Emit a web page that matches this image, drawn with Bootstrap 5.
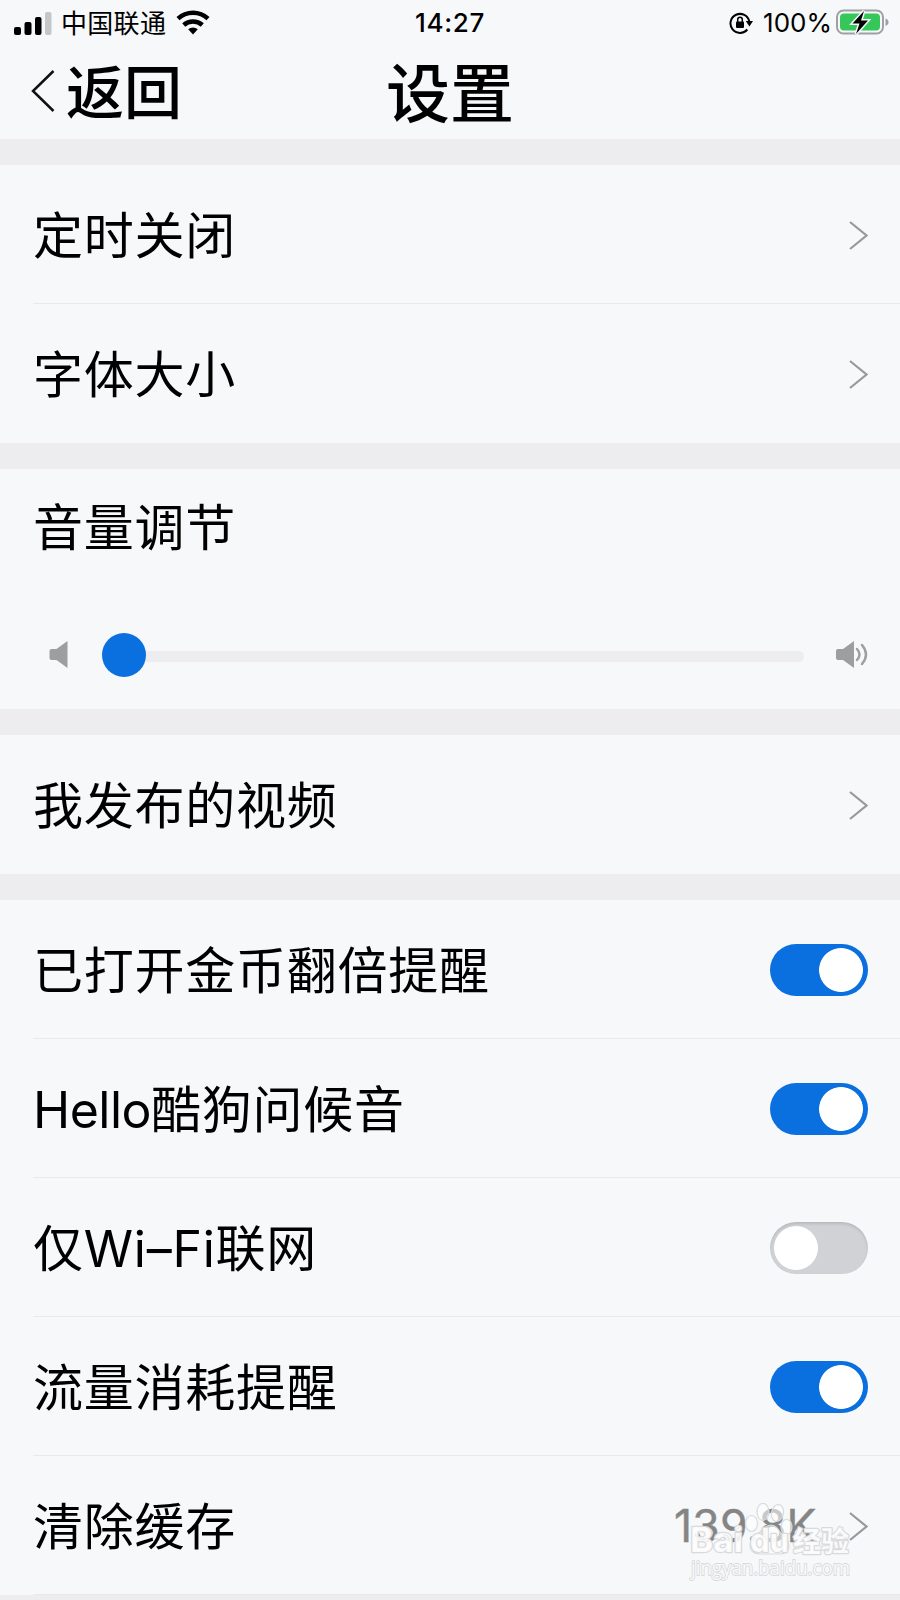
<!DOCTYPE html>
<html lang="zh-CN">
<head>
<meta charset="utf-8">
<meta name="viewport" content="width=device-width, initial-scale=1">
<title>设置</title>
<link rel="stylesheet" href="https://cdn.jsdelivr.net/npm/bootstrap@5.3.0/dist/css/bootstrap.min.css">
<style>
body{background:#ededef;color:#000;font-family:Inter,"Noto Sans CJK SC",sans-serif;width:900px;height:1600px;overflow:hidden}
svg{display:block;flex:none}
.panel{background:#f7f8fa}
.status{height:46px;padding:0 10px 0 14px;font-size:26px;line-height:46px}
.status>div{flex:1 1 0}
.carrier{font-family:"Noto Sans CJK SC",sans-serif;font-size:26px;letter-spacing:.3px;margin:-2px 10px 0 9px}
.clock{font-weight:500;letter-spacing:.7px;font-size:26px;padding-right:4px}
.pct{margin-left:10px;margin-right:4px}
.wifi,.battery{margin-top:-3px}
.topbar{height:93px}
.back{width:300px;padding-left:31px;font-family:"Noto Sans CJK SC",sans-serif;font-size:58px;font-weight:500;line-height:90px}
.back span{margin:-8px 0 0 11px}
.back svg{margin-top:-3px}
.heading{font-family:"Noto Sans CJK SC",sans-serif;font-size:64px;font-weight:500;line-height:90px;width:300px;margin-top:-8px}
.gap-band{height:26px}
.line{height:139px;margin-left:33px;padding:2px 32.5px 0 0;border-bottom:1px solid #e9e9ec}
.line:last-child{border-bottom-color:transparent}
.line>svg{margin-top:1px}
.label{font-size:50px;letter-spacing:.75px;line-height:70px;white-space:nowrap;margin-top:2px}
.latin{letter-spacing:-.5px}
.volume{height:240px;padding-top:24px}
.volume .label{margin-left:33px}
.slider{height:44px;margin-top:71px;padding:0 32px 0 49px}
.slider>svg{margin-bottom:4px}
.track{height:11px;border-radius:6px;background:#ededef;margin:1px 32px 0 33px}
.thumb{width:44px;height:44px;border-radius:50%;background:#0a70df;left:0;top:-18px}
.form-switch.sw{padding:0;margin:0;min-height:0}
.form-switch.sw .form-check-input{width:98px;height:52px;margin:0;border:0;float:none;display:block;border-radius:26px;background-color:#d1d2d6;box-shadow:inset 0 2px 3px #b8b9bd;background-size:44px 44px;background-repeat:no-repeat;background-position:4px 4px;background-image:radial-gradient(circle,#fff 21.5px,transparent 22.3px)}
.form-switch.sw .form-check-input:checked{background-color:#0a70df;box-shadow:none;background-position:49.5px 4px;background-image:radial-gradient(circle,#fff 21.5px,transparent 22.3px)}
.size{color:#858585;font-size:44.5px;letter-spacing:.2px;margin-right:32px;-webkit-text-stroke:.4px #858585}
.watermark{left:680px;bottom:8px}
</style>
</head>
<body>
<svg width="0" height="0" class="position-absolute"><defs>
<path id="chev" d="M1 2 17.500 15.500 1 29" fill="none" stroke="#999" stroke-width="2.200"/>
</defs></svg>
<header class="panel">
  <div class="status d-flex align-items-center">
    <div class="d-flex align-items-center">
      <svg width="38" height="26" viewBox="0 0 38 26"><rect x="0" y="17" width="7" height="8" rx="2"/><rect x="10.500" y="12" width="7" height="13" rx="2"/><rect x="21" y="7" width="6.500" height="18" rx="2"/><rect x="31" y="2" width="6.500" height="23" rx="2" fill="#c5c6c8"/></svg>
      <span class="carrier">中国联通</span>
      <svg class="wifi" width="34" height="26" viewBox="0 0 34 26"><g fill="none" stroke="#000" stroke-width="4.500"><path d="M2 9.700a22 22 0 0 1 30 0"/><path d="M7.700 16a13.800 13.800 0 0 1 18.600 0"/></g><path d="M12.200 20.200a7.500 7.500 0 0 1 9.600 0L17 25.400z"/></svg>
    </div>
    <div class="clock text-center">14:27</div>
    <div class="d-flex align-items-center justify-content-end">
      <svg width="24" height="22" viewBox="0 0 24 22"><path d="M18.300 17.500A9.500 9.500 0 1 1 20.300 9.500" fill="none" stroke="#000" stroke-width="2"/><path d="M16.800 9H24l-3.600 5.500z"/><rect x="7" y="9.500" width="8" height="6.500" rx="1"/><path d="M8.700 10V7.500a2.300 2.300 0 0 1 4.600 0V10" fill="none" stroke="#000" stroke-width="1.500"/></svg>
      <span class="pct">100%</span>
      <svg class="battery" width="54" height="26" viewBox="0 0 54 26"><rect x="1" y="1.500" width="46" height="23" rx="6.500" fill="none" stroke="#a0a0a4" stroke-width="2"/><rect x="4" y="4.500" width="40" height="17" rx="4" fill="#35c759"/><path d="M49.500 9.500q3 1 3 3.700t-3 3.700z" fill="#a0a0a4"/><path d="M28 2 16.500 14.500h7L20 25l12-13.500h-7z" stroke="#f7f8fa" stroke-width="3" paint-order="stroke"/></svg>
    </div>
  </div>
  <nav class="topbar d-flex justify-content-between align-items-center">
    <div class="back d-flex align-items-center"><svg width="24" height="42" viewBox="0 0 24 42"><path d="M22.500 1 2 21l20.500 20" fill="none" stroke="#111" stroke-width="2.500"/></svg><span>返回</span></div>
    <div class="heading text-center">设置</div>
    <div class="back"></div>
  </nav>
</header>
<div class="gap-band"></div>
<section class="panel">
  <div class="line d-flex align-items-center justify-content-between"><span class="label">定时关闭</span><svg width="19" height="31"><use href="#chev"/></svg></div>
  <div class="line d-flex align-items-center justify-content-between"><span class="label">字体大小</span><svg width="19" height="31"><use href="#chev"/></svg></div>
</section>
<div class="gap-band"></div>
<section class="panel volume">
  <div class="label mt-0">音量调节</div>
  <div class="slider d-flex align-items-center">
    <svg width="20" height="27" viewBox="0 0 19 27" fill="#9e9e9e"><path d="M2 8h5L18 0v27L7 19H2q-2 0-2-2v-7q0-2 2-2"/></svg>
    <div class="track position-relative flex-grow-1"><div class="thumb position-absolute"></div></div>
    <svg width="32" height="27" viewBox="0 0 32 27" fill="#9e9e9e"><path d="M2 8h5L18 0v27L7 19H2q-2 0-2-2v-7q0-2 2-2"/><path d="M21 8q5 5.500 0 11M26 4q8 9.500 0 19" fill="none" stroke="#9e9e9e" stroke-width="2.400" stroke-linecap="round"/></svg>
  </div>
</section>
<div class="gap-band"></div>
<section class="panel">
  <div class="line d-flex align-items-center justify-content-between"><span class="label">我发布的视频</span><svg width="19" height="31"><use href="#chev"/></svg></div>
</section>
<div class="gap-band"></div>
<section class="panel position-relative">
  <div class="line d-flex align-items-center justify-content-between"><span class="label">已打开金币翻倍提醒</span><div class="form-check form-switch sw"><input class="form-check-input" type="checkbox" checked></div></div>
  <div class="line d-flex align-items-center justify-content-between"><span class="label"><span class="latin">Hello</span>酷狗问候音</span><div class="form-check form-switch sw"><input class="form-check-input" type="checkbox" checked></div></div>
  <div class="line d-flex align-items-center justify-content-between"><span class="label">仅Wi–Fi联网</span><div class="form-check form-switch sw"><input class="form-check-input" type="checkbox"></div></div>
  <div class="line d-flex align-items-center justify-content-between"><span class="label">流量消耗提醒</span><div class="form-check form-switch sw"><input class="form-check-input" type="checkbox" checked></div></div>
  <div class="line d-flex align-items-center"><span class="label me-auto">清除缓存</span><span class="size">139.8K</span><svg width="19" height="31"><use href="#chev"/></svg></div>
  <svg class="watermark position-absolute" width="180" height="84" viewBox="0 0 180 84">
    <g fill="#fff" fill-opacity=".55" stroke="#d9dadc" stroke-width="1.200">
      <ellipse cx="71.500" cy="20.500" rx="6" ry="8"/><ellipse cx="83" cy="9" rx="6" ry="8.500"/><ellipse cx="97.500" cy="10" rx="6" ry="8.500" transform="rotate(12 97.500 10)"/><ellipse cx="106.500" cy="24" rx="5.500" ry="7.500"/>
      <path d="M91 22q5 0 9 7 9 6 9 13 0 9-9 9H80q-10 0-10-9 0-7 10-13 6-7 11-7z"/>
    </g>
    <g stroke="#d9dadc" stroke-width="2.400" fill="#fff" fill-opacity=".85" paint-order="stroke" font-weight="700" stroke-linejoin="round">
      <text x="10" y="49" font-family="Inter" font-size="34" textLength="53" lengthAdjust="spacingAndGlyphs">Bai</text>
      <text x="70" y="49" font-family="Inter" font-size="32" textLength="39" lengthAdjust="spacingAndGlyphs">du</text>
      <text x="113" y="49" font-family="Noto Sans CJK SC" font-size="28" textLength="56">经验</text>
      <text x="11" y="72" font-family="Open Sans" font-weight="400" font-size="20" stroke-width="1.800" textLength="159" lengthAdjust="spacingAndGlyphs">jingyan.baidu.com</text>
    </g>
  </svg>
</section>
<script src="https://cdn.jsdelivr.net/npm/bootstrap@5.3.0/dist/js/bootstrap.bundle.min.js"></script>
</body>
</html>
